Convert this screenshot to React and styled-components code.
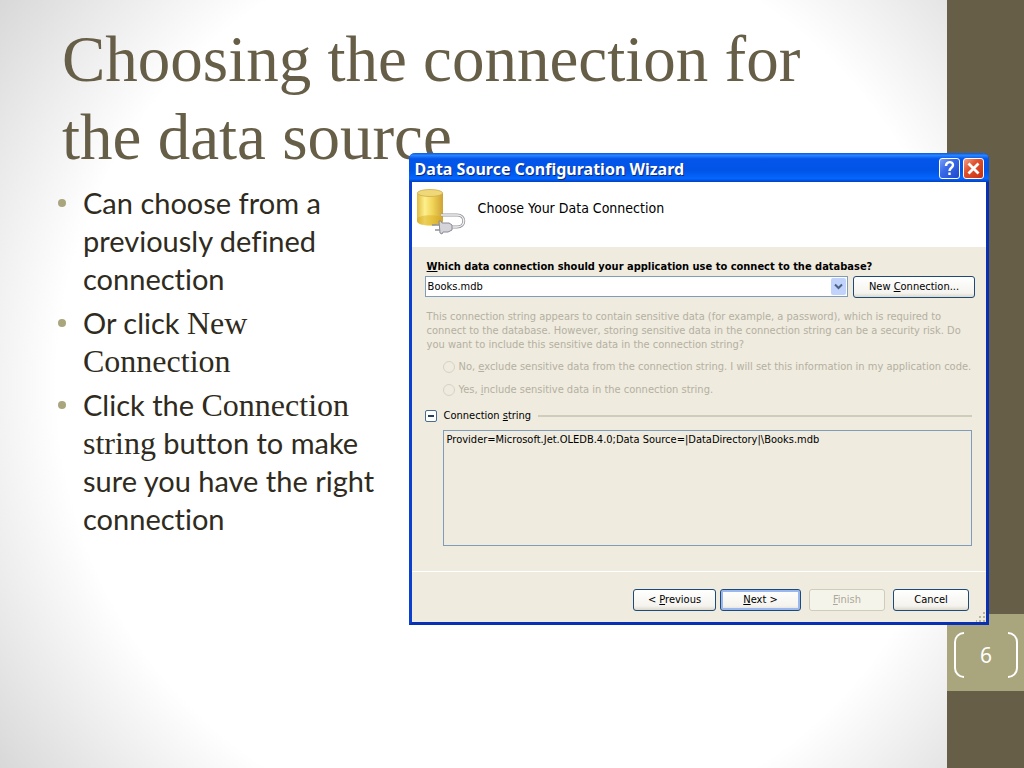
import { useState } from 'react';
import styled, { createGlobalStyle, css } from 'styled-components';

const GlobalStyle = createGlobalStyle`
  * { box-sizing: border-box; }
  body { margin: 0; }
`

const Slide = styled.div`
  position: relative;
  display: flex;
  min-height: 100vh;
  overflow: hidden;
  font-family: Lato, sans-serif;
  font-variant-ligatures: none;
  color: #2f2b20;
`

const Content = styled.main`
  flex: 1;
  padding: 20px 60px 0 62px;
  background: radial-gradient(circle at 54% 50%, #fff 71%, #d8d8d8 100%);
`

const Title = styled.h1`
  margin: 0;
  color: #675e47;
  font: 400 65px/78px 'Liberation Serif', serif;
`

const Points = styled.ul`
  display: flex;
  flex-direction: column;
  gap: 6px;
  width: 39%;
  margin: 8px 0 0;
  padding: 0;
  list-style: none;
`

const Point = styled.li`
  position: relative;
  padding-left: 21px;
  font-size: 29px;
  line-height: 38px;

  &::before {
    content: '';
    position: absolute;
    left: -4px;
    top: 15px;
    width: 8px;
    height: 8px;
    border-radius: 50%;
    background: #a9a57c;
  }
`

const Term = styled.span`
  font-family: 'Liberation Serif', serif;
  font-size: 32px;
  line-height: 32px;
`

const Sidebar = styled.aside`
  display: flex;
  flex-direction: column;
  width: 77px;
  padding-top: 614px;
  background: #675e47;
`

const PageNumber = styled.div`
  display: flex;
  align-items: center;
  justify-content: space-between;
  height: 77px;
  padding: 4px 6px 0 7px;
  background: #a9a57c;
  color: #fff;
  font: 21px/28px 'Noto Sans', sans-serif;
`

const Bracket = styled.span`
  width: 10px;
  height: 46px;
  border: 2px solid #fff;
  ${({ $side }) => $side === 'left'
    ? css`border-right: 0; border-radius: 10px 0 0 10px;`
    : css`border-left: 0; border-radius: 0 10px 10px 0;`}
`

const Dialog = styled.section`
  position: absolute;
  top: 153px;
  left: calc(40% - 1px);
  right: 35px;
  border: 3px solid #0a3fd0;
  border-top: 0;
  border-right-color: #0830b4;
  border-bottom-color: #0830b4;
  border-radius: 6px 6px 0 0;
  background: #efebde;
  color: #000;
  font: 11px/14px 'DejaVu Sans Condensed', sans-serif;
`

const TitleBar = styled.header`
  display: flex;
  align-items: center;
  gap: 3px;
  height: 29px;
  margin: 0 -3px;
  padding: 2px 5px 0 6px;
  border-radius: 6px 6px 0 0;
  background: linear-gradient(#0a58e0, #2a86ff 8%, #0456ea 20%, #0054e6 60%, #0466ff 88%, #0340c0);
`

const Caption = styled.h2`
  flex: 1;
  margin: 0;
  color: #fff;
  font: 700 16px/20px 'Noto Sans', sans-serif;
  text-shadow: 1px 1px #0a2a80;
`

const CaptionButton = styled.button`
  width: 21px;
  height: 21px;
  padding: 0;
  border: 1px solid #fff;
  border-radius: 3px;
  background: ${({ $close }) => $close
    ? 'linear-gradient(135deg, #f0a088, #e0502c 40%, #c83010)'
    : 'linear-gradient(135deg, #7aa0f4, #3a6ae8 40%, #1c48cc)'};

  svg { display: block; }
`

const Banner = styled.div`
  display: flex;
  gap: 11px;
  height: 65px;
  padding: 7px 5px;
  background: #fff;
`

const BannerTitle = styled.h3`
  margin: 0;
  padding-top: 10px;
  font: 500 14px/18px 'DejaVu Sans Condensed', sans-serif;
`

const Body = styled.div`
  padding: 13px 11px 0 13px;
`

const Question = styled.label`
  display: block;
  padding-left: 2px;
  font-weight: 700;
`

const SourceRow = styled.div`
  display: flex;
  gap: 5px;
  margin-top: 2px;
`

const SelectBox = styled.div`
  position: relative;
  flex: 1;

  svg { position: absolute; top: 2px; right: 2px; pointer-events: none; }
`

const Select = styled.select`
  display: block;
  width: 100%;
  height: 21px;
  padding: 0 2px;
  border: 1px solid #7f9db9;
  border-radius: 0;
  background: #fff;
  color: #000;
  font: inherit;
  appearance: none;
`

const Button = styled.button`
  width: ${({ $width }) => $width}px;
  height: 22px;
  padding: 0;
  border: 1px solid #1d4a78;
  border-radius: 3px;
  background: linear-gradient(#fff, #f4f3ee 80%, #dcd8cc);
  color: #000;
  font: inherit;

  ${({ $primary }) => $primary && css`box-shadow: inset 0 0 0 2px #9ab8ee;`}

  &:disabled {
    border-color: #cfccbd;
    background: #f5f4ea;
    color: #aca899;
  }
`

const Notice = styled.p`
  margin: 12px 0 0 2px;
  color: #b4b0a2;
`

const Choices = styled.fieldset`
  display: flex;
  flex-direction: column;
  gap: 9px;
  margin: 8px 0 0 18px;
  padding: 0;
  border: 0;
`

const Choice = styled.label`
  display: flex;
  align-items: center;
  gap: 4px;
  color: #b4b0a2;
  white-space: nowrap;
`

const Radio = styled.input`
  width: 12px;
  height: 12px;
  margin: 0;
  border: 1px solid #d6d2c4;
  border-radius: 50%;
  appearance: none;
`

const StringHeader = styled.div`
  display: flex;
  align-items: center;
  gap: 7px;
  margin: 12px 3px 0 0;

  &::after {
    content: '';
    flex: 1;
    height: 2px;
    background: #d0ccbb;
  }
`

const Toggle = styled.button`
  display: grid;
  place-items: center;
  width: 12px;
  height: 12px;
  padding: 0;
  border: 1px solid #4a6a94;
  border-radius: 2px;
  background: #fff;
`

const ConnectionString = styled.textarea`
  display: block;
  width: calc(100% - 21px);
  height: 116px;
  margin: 7px 3px 0 18px;
  padding: 2px 3px;
  border: 1px solid #7f9db9;
  background: transparent;
  color: #000;
  font: inherit;
  resize: none;
`

const Footer = styled.footer`
  position: relative;
  display: flex;
  justify-content: flex-end;
  gap: 4px;
  margin-top: 25px;
  padding: 17px 17px 11px;
  border-top: 1px solid #fff;
`

const Spacer = styled.span`
  width: 0;
`

const Grip = styled.svg`
  position: absolute;
  right: 0;
  bottom: 0;
`

const DatabaseIcon = () => (
  <svg width="50" height="48" viewBox="0 0 50 48" aria-hidden="true">
    <defs>
      <linearGradient id="gold">
        <stop offset="0" stopColor="#e0bb44" />
        <stop offset=".3" stopColor="#fdf08c" />
        <stop offset=".6" stopColor="#f0d458" />
        <stop offset="1" stopColor="#cfa236" />
      </linearGradient>
    </defs>
    <path d="M0 4v28c0 6 26 6 26 0V4z" fill="url(#gold)" />
    <path d="M0 30c2-5 24-5 26 0v2c0 6-26 6-26 0z" fill="#d8a81c" opacity=".45" />
    <ellipse cx="13" cy="4" rx="12.600" ry="3.500" fill="#efd878" stroke="#cfac4c" strokeWidth=".8" />
    <path d="M24 26h16c9 0 9 12 0 12h-5" fill="none" stroke="#96969c" strokeWidth="3" />
    <path d="M24 26h16c9 0 9 12 0 12h-5" fill="none" stroke="#f0f0f4" strokeWidth="1.400" />
    <path d="M15 36h8M18 41h6" stroke="#909098" strokeWidth="1.600" />
    <path d="M22 32l2 0 1 2 7 0 3 2v5l-4 2-5 0-1 2-2-1z" fill="#d4d4da" stroke="#8a8a92" />
  </svg>
)

function App() {
  const [connection, setConnection] = useState('Books.mdb')

  return (
    <Slide>
      <GlobalStyle />
      <Content>
        <Title>Choosing the connection for the data source</Title>
        <Points>
          <Point>Can choose from a previously defined connection</Point>
          <Point>Or click <Term>New Connection</Term></Point>
          <Point>Click the <Term>Connection string</Term> button to make sure you have the right connection</Point>
        </Points>
      </Content>
      <Sidebar>
        <PageNumber>
          <Bracket $side="left" />
          6
          <Bracket $side="right" />
        </PageNumber>
      </Sidebar>
      <Dialog aria-label="Data Source Configuration Wizard">
        <TitleBar>
          <Caption>Data Source Configuration Wizard</Caption>
          <CaptionButton aria-label="Help">
            <svg width="19" height="19" fill="none" stroke="#fff" strokeWidth="2.4">
              <path d="M6 7c0-5 7-5 7-1 0 3-3.500 2.500-3.500 6M9.500 13.500v2.500" />
            </svg>
          </CaptionButton>
          <CaptionButton $close aria-label="Close">
            <svg width="19" height="19" stroke="#fff" strokeWidth="2.8">
              <path d="M4.500 4.500l10 10M14.500 4.500l-10 10" />
            </svg>
          </CaptionButton>
        </TitleBar>
        <Banner>
          <DatabaseIcon />
          <BannerTitle>Choose Your Data Connection</BannerTitle>
        </Banner>
        <Body>
          <Question htmlFor="connection"><u>W</u>hich data connection should your application use to connect to the database?</Question>
          <SourceRow>
            <SelectBox>
              <Select id="connection" value={connection} onChange={e => setConnection(e.target.value)}>
                <option>Books.mdb</option>
              </Select>
              <svg width="15" height="17">
                <rect width="15" height="17" rx="2" fill="#c1d3fb" />
                <path d="M4 6.500l3.500 3.500L11 6.500" fill="none" stroke="#4d6185" strokeWidth="2" />
              </svg>
            </SelectBox>
            <Button $width={122}>New <u>C</u>onnection...</Button>
          </SourceRow>
          <Notice>
            This connection string appears to contain sensitive data (for example, a password), which is required to
            connect to the database. However, storing sensitive data in the connection string can be a security risk. Do
            you want to include this sensitive data in the connection string?
          </Notice>
          <Choices disabled>
            <Choice><Radio type="radio" name="sensitive" /><span>No, <u>e</u>xclude sensitive data from the connection string. I will set this information in my application code.</span></Choice>
            <Choice><Radio type="radio" name="sensitive" /><span>Yes, <u>i</u>nclude sensitive data in the connection string.</span></Choice>
          </Choices>
          <StringHeader>
            <Toggle aria-label="Collapse connection string">
              <svg width="6" height="2"><rect width="6" height="2" fill="#23406c" /></svg>
            </Toggle>
            <label htmlFor="connection-string">Connection <u>s</u>tring</label>
          </StringHeader>
          <ConnectionString id="connection-string" readOnly value="Provider=Microsoft.Jet.OLEDB.4.0;Data Source=|DataDirectory|\Books.mdb" />
        </Body>
        <Footer>
          <Button $width={83}>&lt; <u>P</u>revious</Button>
          <Button $width={81} $primary><u>N</u>ext &gt;</Button>
          <Spacer />
          <Button $width={76} disabled><u>F</u>inish</Button>
          <Spacer />
          <Button $width={76}>Cancel</Button>
          <Grip width="10" height="10" fill="#b8b4a2">
            <path d="M7 0h2v2h-2zM7 4h2v2h-2zM3 4h2v2h-2zM7 8h2v2h-2zM3 8h2v2h-2zM0 8h1v2h-1z" />
          </Grip>
        </Footer>
      </Dialog>
    </Slide>
  );
}

export default App;
